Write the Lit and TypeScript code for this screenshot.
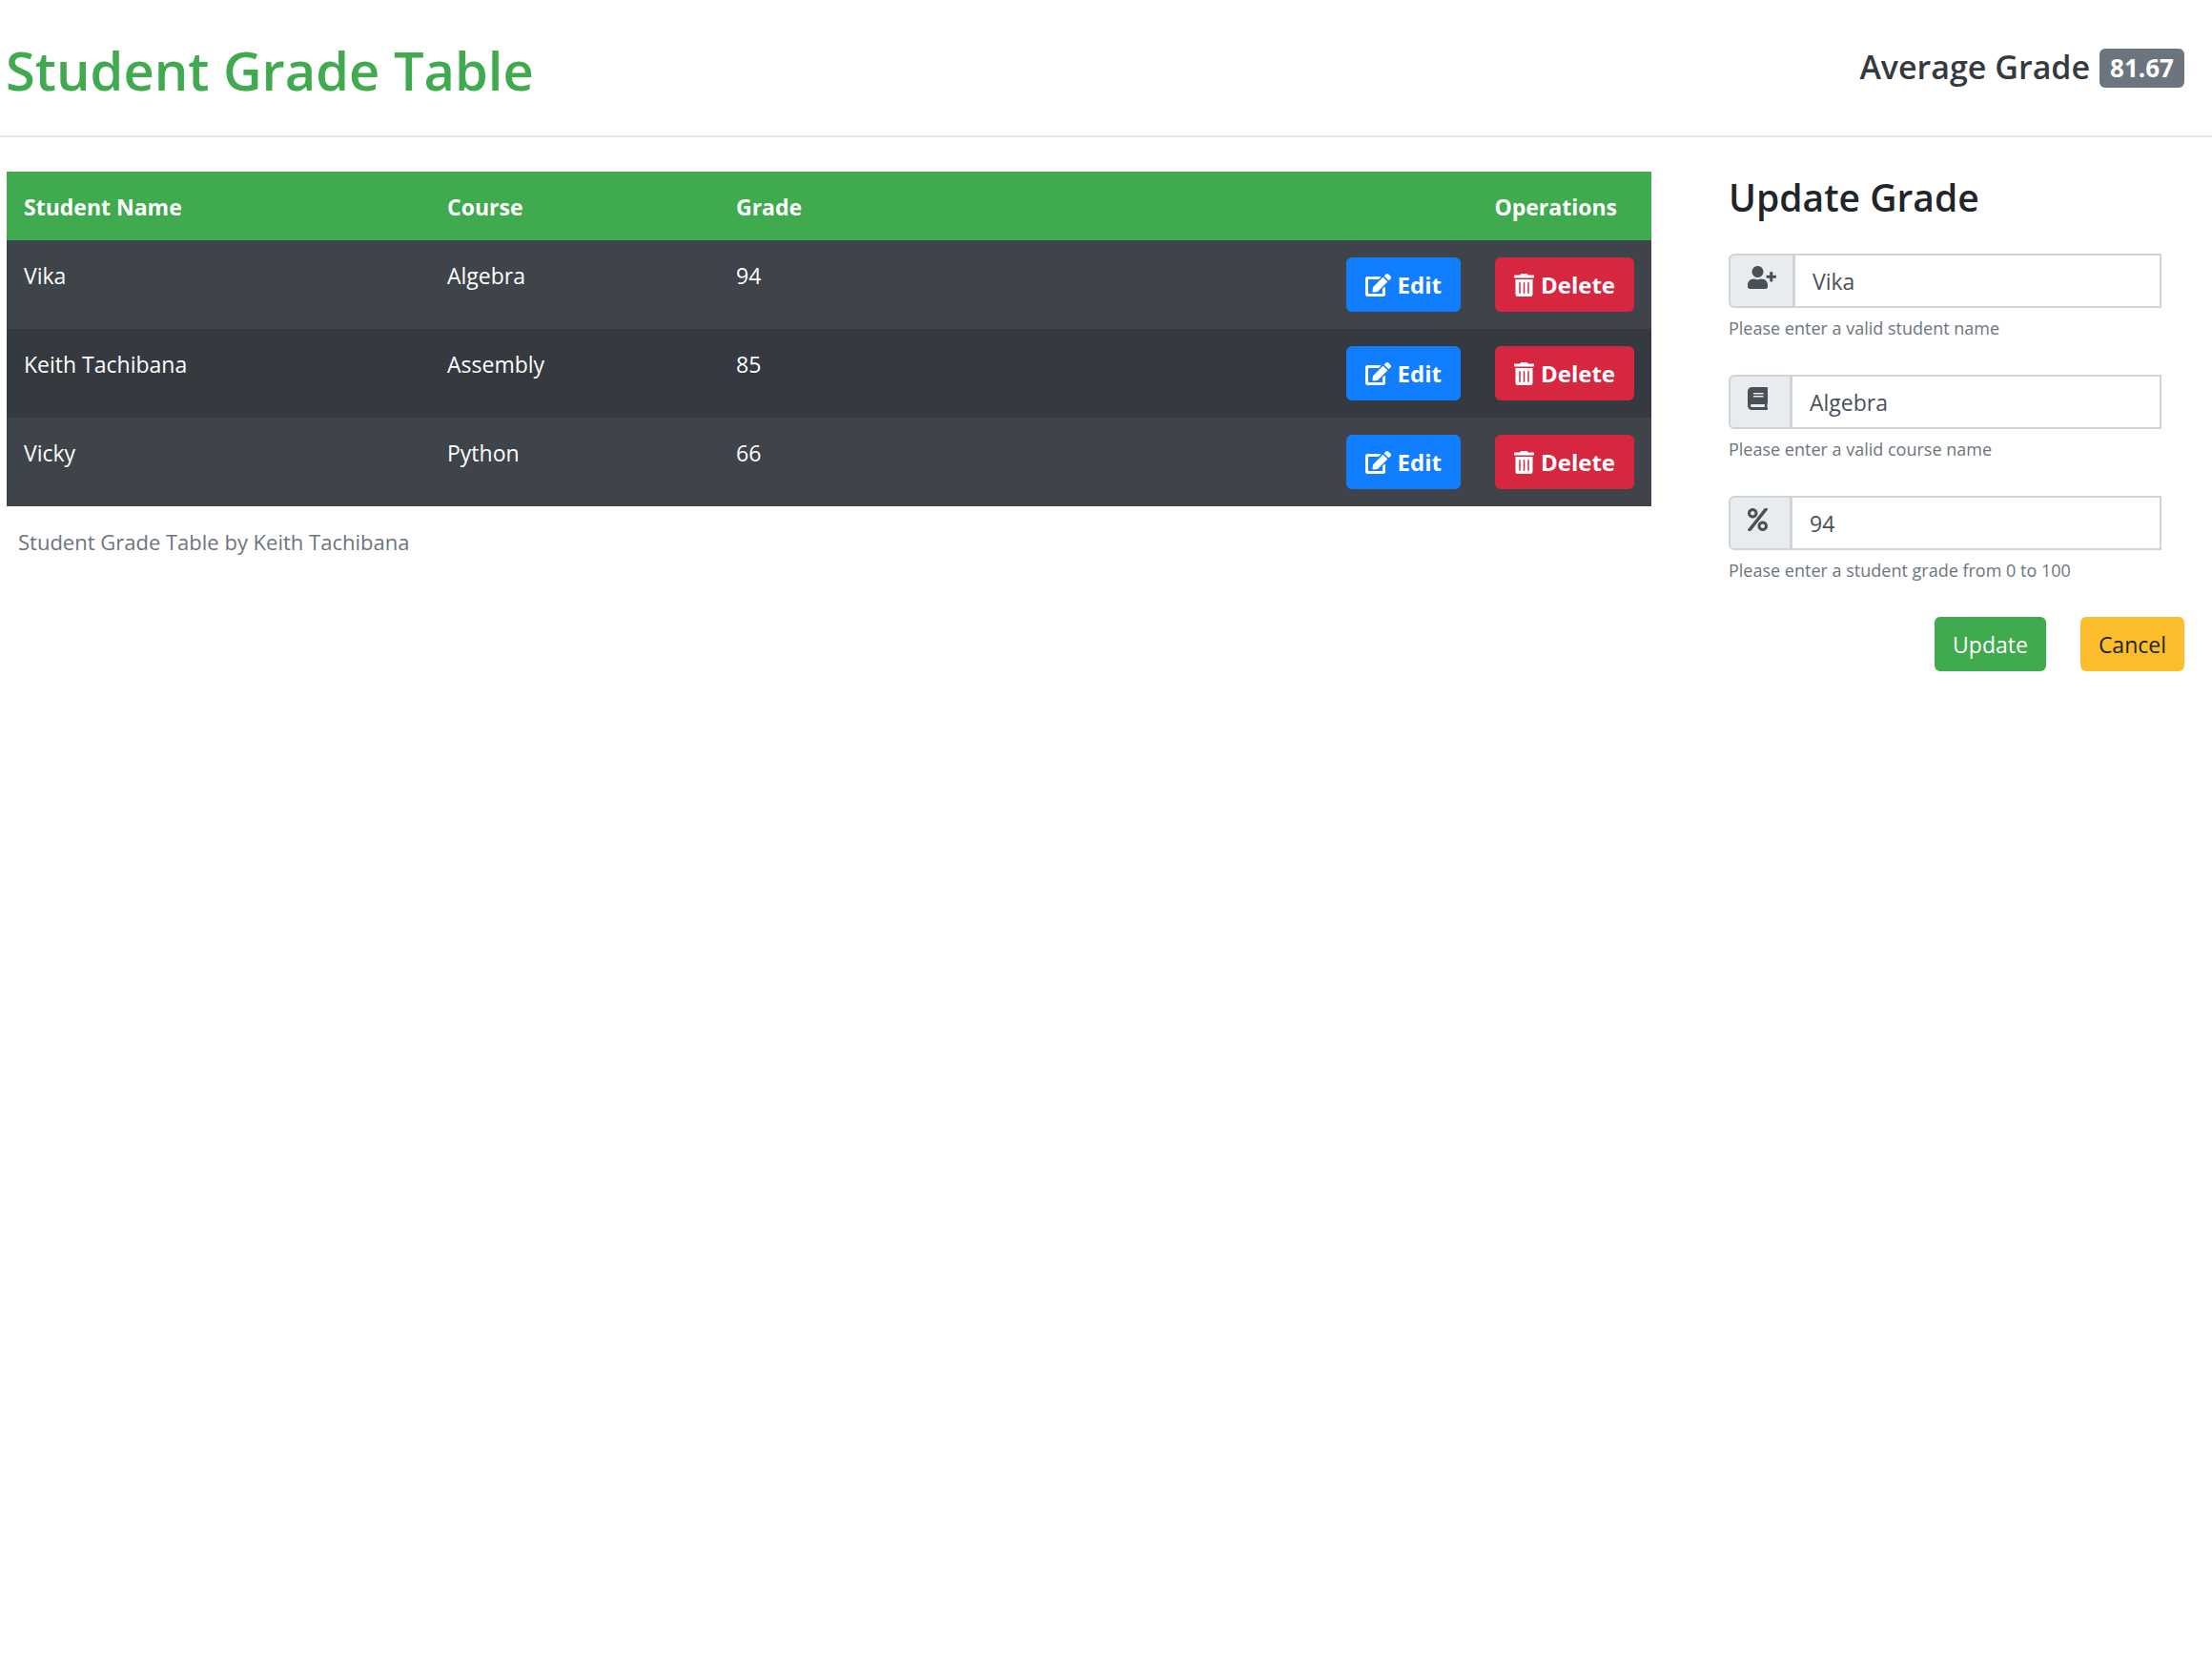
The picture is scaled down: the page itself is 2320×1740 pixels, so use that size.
import { LitElement, html, css, svg, TemplateResult } from "lit";
import { customElement, state } from "lit/decorators.js";

interface Entry {
  name: string;
  course: string;
  grade: number;
}

interface Field {
  id: string;
  label: string;
  value: string;
  help: string;
  icon: TemplateResult;
}

const paths = {
  edit: "M402.6 83.2l90.2 90.2c3.800 3.800 3.800 10 0 13.800L274.400 405.600l-92.800 10.300c-12.400 1.400-22.900-9.100-21.500-21.500l10.300-92.800L388.800 83.200c3.800-3.800 10-3.800 13.800 0zm162-22.900l-48.800-48.800c-15.200-15.200-39.900-15.200-55.200 0l-35.400 35.400c-3.800 3.800-3.800 10 0 13.800l90.200 90.200c3.800 3.800 10 3.800 13.800 0l35.400-35.400c15.200-15.300 15.200-40 0-55.200zM384 346.200V448H64V128h229.800c3.200 0 6.200-1.300 8.500-3.500l40-40c7.600-7.600 2.200-20.500-8.500-20.500H48C21.500 64 0 85.500 0 112v352c0 26.500 21.500 48 48 48h352c26.500 0 48-21.500 48-48V306.200c0-10.700-12.900-16-20.500-8.500l-40 40c-2.200 2.300-3.500 5.300-3.500 8.500z",
  trash: "M32 464a48 48 0 0 0 48 48h288a48 48 0 0 0 48-48V128H32zm272-256a16 16 0 0 1 32 0v224a16 16 0 0 1-32 0zm-96 0a16 16 0 0 1 32 0v224a16 16 0 0 1-32 0zm-96 0a16 16 0 0 1 32 0v224a16 16 0 0 1-32 0zM432 32H312l-9.400-18.700A24 24 0 0 0 281.100 0H166.800a23.720 23.720 0 0 0-21.400 13.300L136 32H16A16 16 0 0 0 0 48v32a16 16 0 0 0 16 16h416a16 16 0 0 0 16-16V48a16 16 0 0 0-16-16z",
  user: "M624 208h-64v-64c0-8.800-7.200-16-16-16h-32c-8.800 0-16 7.200-16 16v64h-64c-8.800 0-16 7.200-16 16v32c0 8.800 7.200 16 16 16h64v64c0 8.800 7.200 16 16 16h32c8.800 0 16-7.200 16-16v-64h64c8.800 0 16-7.200 16-16v-32c0-8.800-7.200-16-16-16zm-400 48c70.700 0 128-57.300 128-128S294.700 0 224 0 96 57.300 96 128s57.300 128 128 128zm89.600 32h-16.700c-22.200 10.200-46.900 16-72.900 16s-50.600-5.800-72.900-16h-16.700C60.200 288 0 348.200 0 422.400V464c0 26.500 21.500 48 48 48h352c26.500 0 48-21.500 48-48v-41.600c0-74.200-60.200-134.400-134.400-134.400z",
  book: "M448 360V24c0-13.300-10.700-24-24-24H96C43 0 0 43 0 96v320c0 53 43 96 96 96h328c13.300 0 24-10.700 24-24v-16c0-7.500-3.500-14.300-8.900-18.700-4.200-15.400-4.200-59.300 0-74.700 5.400-4.300 8.900-11.100 8.900-18.600zM128 134c0-3.300 2.700-6 6-6h212c3.300 0 6 2.700 6 6v20c0 3.300-2.700 6-6 6H134c-3.300 0-6-2.700-6-6v-20zm0 64c0-3.300 2.700-6 6-6h212c3.300 0 6 2.700 6 6v20c0 3.300-2.700 6-6 6H134c-3.300 0-6-2.700-6-6v-20zm253.400 250H96c-17.700 0-32-14.300-32-32 0-17.600 14.400-32 32-32h285.400c-1.900 17.100-1.900 46.900 0 64z",
  percent: "M112 224c61.900 0 112-50.100 112-112S173.900 0 112 0 0 50.100 0 112s50.100 112 112 112zm0-160c26.500 0 48 21.500 48 48s-21.500 48-48 48-48-21.500-48-48 21.500-48 48-48zm224 224c-61.900 0-112 50.100-112 112s50.100 112 112 112 112-50.100 112-112-50.100-112-112-112zm0 160c-26.500 0-48-21.500-48-48s21.500-48 48-48 48 21.500 48 48-21.500 48-48 48zM392.300 0h31.600c19.400 0 30.900 21.800 19.700 37.800L77.400 501.600a23.950 23.950 0 0 1-19.600 10.200H23.500c-19.500 0-30.900-21.900-19.700-37.800l368-463.800C376.400 3.800 384 0 392.300 0z",
};

const glyph = (d: string, width: number) => html`
  <svg class="icon" viewBox="0 0 ${width} 512" height="24" width=${(width * 24) / 512} aria-hidden="true">
    ${svg`<path d=${d} fill="currentColor"></path>`}
  </svg>`;

@customElement("app-root")
export class AppRoot extends LitElement {
  static styles = css`
    :host {
      display: block;
      min-height: 100vh;
      background: #fff;
      color: #212529;
      font-family: "Open Sans", "Noto Sans", sans-serif;
      font-size: 23px;
      line-height: 36px;
    }
    * {
      box-sizing: border-box;
    }
    h1,
    h2,
    p {
      margin: 0;
    }
    .top {
      display: flex;
      justify-content: space-between;
      align-items: flex-start;
      padding: 37px 29px 33px 6px;
      border-bottom: 2px solid #e6e6e6;
    }
    .title {
      color: #40aa4e;
      font-size: 56px;
      font-weight: 600;
      line-height: 72px;
    }
    .average {
      display: flex;
      align-items: center;
      gap: 10px;
      padding-top: 10px;
      color: #343a40;
      font-size: 34px;
      font-weight: 600;
      line-height: 44px;
    }
    .badge {
      padding: 0 11px;
      margin-top: 4px;
      border-radius: 6px;
      background: #6c757d;
      color: #fff;
      font-size: 26px;
      font-weight: 700;
      line-height: 41px;
    }
    .layout {
      display: grid;
      grid-template-columns: 3fr 1fr;
      padding-top: 36px;
    }
    .records {
      padding: 0 8px 0 7px;
    }
    .table {
      width: 100%;
      border-collapse: collapse;
      table-layout: fixed;
      color: #fff;
    }
    .table caption {
      caption-side: bottom;
      padding: 19px 12px 17px;
      color: #6c757d;
      font-size: 22px;
      text-align: left;
    }
    .table th,
    .table td {
      padding: 19px 18px 17px;
      text-align: left;
      vertical-align: top;
    }
    .table .ops-cell {
      padding: 18px;
    }
    .table thead {
      background: #40aa4e;
    }
    .table tbody tr {
      background: #343a40;
    }
    .table tbody tr:nth-child(odd) {
      background: #3e444a;
    }
    .col-name {
      width: 444px;
    }
    .col-course {
      width: 303px;
    }
    .table .ops-head {
      padding-right: 36px;
      text-align: right;
    }
    .ops {
      display: flex;
      justify-content: flex-end;
      gap: 36px;
    }
    .btn {
      display: inline-flex;
      align-items: center;
      justify-content: center;
      gap: 7px;
      height: 57px;
      padding: 0 19px;
      border: 0;
      border-radius: 6px;
      color: #fff;
      font: inherit;
      cursor: pointer;
    }
    .strong {
      padding: 0 20px;
      font-size: 24px;
      font-weight: 700;
    }
    .edit {
      background: #117dff;
    }
    .delete {
      background: #d7263f;
    }
    .save {
      background: #40aa4e;
    }
    .cancel {
      background: #fcbd2d;
      color: #212529;
    }
    .icon {
      display: block;
      flex: none;
    }
    .panel {
      padding: 0 29px 0 73px;
    }
    .panel-title {
      margin-bottom: 32px;
      font-size: 39px;
      font-weight: 600;
      line-height: 54px;
    }
    .form {
      display: flex;
      flex-direction: column;
      gap: 35px;
    }
    .group {
      display: flex;
      height: 57px;
      margin-right: 24px;
    }
    .addon {
      flex: none;
      min-width: 65px;
      padding: 11px 17px 0 18px;
      border: 2px solid #ced4da;
      border-right-width: 1px;
      border-radius: 6px 0 0 6px;
      background: #e9ecef;
      color: #495057;
    }
    .input {
      flex: 1;
      min-width: 0;
      padding: 0 18px;
      border: 2px solid #ced4da;
      border-radius: 0;
      background: #fff;
      color: #495057;
      font: inherit;
    }
    .help {
      margin-top: 7px;
      color: #6c757d;
      font-size: 18px;
      line-height: 28px;
    }
    .actions {
      display: flex;
      justify-content: flex-end;
      gap: 36px;
    }
  `;

  @state() private entries: Entry[] = [
    { name: "Vika", course: "Algebra", grade: 94 },
    { name: "Keith Tachibana", course: "Assembly", grade: 85 },
    { name: "Vicky", course: "Python", grade: 66 },
  ];

  private get fields(): Field[] {
    const [current] = this.entries;
    return [
      { id: "name", label: "Student name", value: current.name, help: "Please enter a valid student name", icon: glyph(paths.user, 640) },
      { id: "course", label: "Course", value: current.course, help: "Please enter a valid course name", icon: glyph(paths.book, 448) },
      { id: "grade", label: "Grade", value: String(current.grade), help: "Please enter a student grade from 0 to 100", icon: glyph(paths.percent, 448) },
    ];
  }

  private get average(): string {
    const total = this.entries.reduce((sum, entry) => sum + entry.grade, 0);
    return (total / this.entries.length).toFixed(2);
  }

  private renderRow(entry: Entry) {
    return html`<tr>
      <td>${entry.name}</td>
      <td>${entry.course}</td>
      <td>${entry.grade}</td>
      <td class="ops-cell">
        <div class="ops">
          <button type="button" class="btn strong edit">${glyph(paths.edit, 576)}<span>Edit</span></button>
          <button type="button" class="btn strong delete">${glyph(paths.trash, 448)}<span>Delete</span></button>
        </div>
      </td>
    </tr>`;
  }

  private renderField(field: Field) {
    return html`<div>
      <div class="group">
        <label class="addon" for=${field.id} aria-label=${field.label}>${field.icon}</label>
        <input class="input" id=${field.id} type="text" .value=${field.value} aria-describedby="${field.id}-help" />
      </div>
      <p class="help" id="${field.id}-help">${field.help}</p>
    </div>`;
  }

  render() {
    return html`
      <header class="top">
        <h1 class="title">Student Grade Table</h1>
        <h2 class="average"><span>Average Grade</span><span class="badge">${this.average}</span></h2>
      </header>
      <main class="layout">
        <section class="records">
          <table class="table">
            <caption>Student Grade Table by Keith Tachibana</caption>
            <thead>
              <tr>
                <th class="col-name" scope="col">Student Name</th>
                <th class="col-course" scope="col">Course</th>
                <th scope="col">Grade</th>
                <th class="ops-head" scope="col">Operations</th>
              </tr>
            </thead>
            <tbody>
              ${this.entries.map((entry) => this.renderRow(entry))}
            </tbody>
          </table>
        </section>
        <aside class="panel">
          <h2 class="panel-title">Update Grade</h2>
          <form class="form">
            ${this.fields.map((field) => this.renderField(field))}
            <div class="actions">
              <button type="button" class="btn save">Update</button>
              <button type="button" class="btn cancel">Cancel</button>
            </div>
          </form>
        </aside>
      </main>
    `;
  }
}
